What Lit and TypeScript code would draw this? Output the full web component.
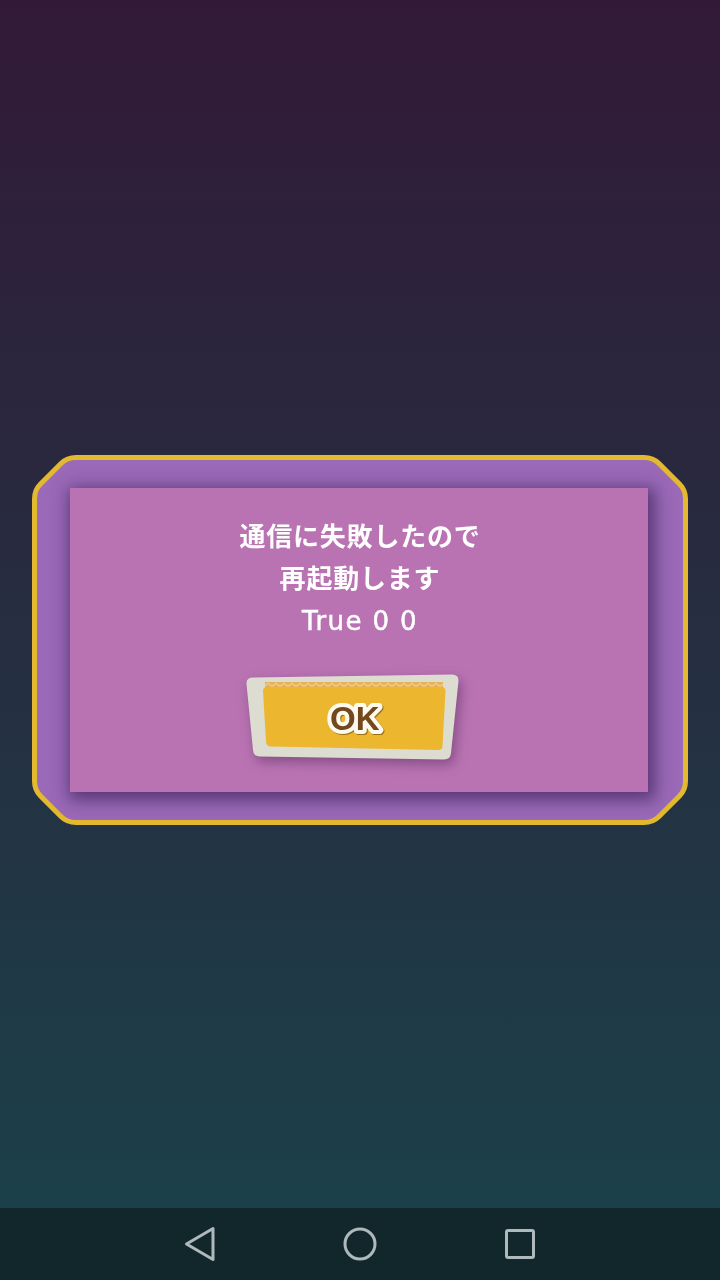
import { LitElement, html, css } from "lit";
import { customElement } from "lit/decorators.js";

@customElement("app-root")
export class AppRoot extends LitElement {
  static styles = css`
    :host {
      display: flex;
      flex-direction: column;
      width: 720px;
      height: 1280px;
      overflow: hidden;
      font-family: "Noto Sans CJK JP", "Noto Sans", sans-serif;
    }
    .screen {
      flex: 1;
      padding: 455px 32px 0;
      background: linear-gradient(180deg, #321938 0%, #1b404a 100%);
    }
    .dialog {
      position: relative;
      width: 656px;
      height: 370px;
      padding: 33px 40px 33px 38px;
      box-sizing: border-box;
    }
    .frame {
      position: absolute;
      inset: 0;
    }
    .panel {
      position: relative;
      height: 304px;
      padding-top: 26px;
      box-sizing: border-box;
      background: #b973b2;
      box-shadow: 3px 4px 15px 4px rgba(58, 32, 88, 0.68);
    }
    .message {
      padding-left: 2px;
      color: #fff;
      font-size: 26px;
      font-weight: 700;
      line-height: 42px;
      letter-spacing: 0.8px;
      text-align: center;
      filter: blur(0.35px);
    }
    .latin {
      font-family: "DejaVu Sans", sans-serif;
      font-weight: 400;
      letter-spacing: 1.4px;
      -webkit-text-stroke: 0.5px #fff;
    }
    .ok {
      width: 226px;
      height: 96px;
      margin: 28px 0 0 170px;
    }
    .ok svg {
      display: block;
      filter: drop-shadow(3px 5px 6px rgba(80, 40, 90, 0.5));
    }
    .ok text {
      font-family: "Liberation Sans", sans-serif;
      font-size: 33px;
      font-weight: 700;
      fill: #74481d;
      stroke: #fdfbf0;
      stroke-width: 8px;
      stroke-linejoin: round;
      paint-order: stroke;
      filter: drop-shadow(1px 1.5px 0.5px rgba(125, 85, 15, 0.75));
    }
    .nav {
      flex: none;
      height: 72px;
      display: flex;
      align-items: center;
      justify-content: center;
      gap: 120px;
      background: #12272c;
    }
    .nav svg {
      display: block;
      fill: none;
      stroke: #aeb9bc;
      stroke-width: 3;
      stroke-linejoin: round;
    }
  `;

  render() {
    return html`
      <div class="screen">
        <div class="dialog">
          <svg class="frame" width="656" height="370" viewBox="0 0 656 370">
            <path
              d="M44 2.500H612Q621 2.500 627 8.500L647.500 29Q653.500 35 653.500 44V326Q653.500 335 647.500 341L627 361.500Q621 367.500 612 367.500H44Q35 367.500 29 361.500L8.500 341Q2.500 335 2.500 326V44Q2.500 35 8.500 29L29 8.500Q35 2.500 44 2.500Z"
              fill="#9a69b7"
              stroke="#e2b92f"
              stroke-width="5"
            />
          </svg>
          <div class="panel">
            <div class="message">
              通信に失敗したので<br />再起動します<br /><span class="latin">True 0 0</span>
            </div>
            <div class="ok">
              <svg width="226" height="96" viewBox="0 0 226 96">
                <defs>
                  <pattern id="wafer" width="8" height="5" patternUnits="userSpaceOnUse">
                    <rect width="8" height="5" fill="#eec56c" />
                    <path d="M0 4L4 1L8 4" fill="none" stroke="#e4a858" stroke-width="1.500" />
                  </pattern>
                </defs>
                <path
                  d="M13 7.500L212 4.500Q219 4.500 218.500 11L211 83Q210.500 89.500 204 89.500L20 86.500Q13.500 86.500 13 80L6.500 14Q6 7.500 13 7.500Z"
                  fill="#dcdcd0"
                />
                <rect x="25" y="12" width="178" height="6" fill="url(#wafer)" />
                <path
                  d="M27 17H201Q205.500 17 205.500 21L202.500 76Q202.500 80 198 80L31 76.500Q26.500 76.500 26 72L23 21Q23 17 27 17Z"
                  fill="#ecb72f"
                />
                <text x="90" y="60">OK</text>
              </svg>
            </div>
          </div>
        </div>
      </div>
      <div class="nav">
        <svg width="40" height="40" viewBox="0 0 40 40">
          <path d="M6.500 20L33 4.500V35.500Z" />
        </svg>
        <svg width="40" height="40" viewBox="0 0 40 40">
          <circle cx="20" cy="20" r="15" />
        </svg>
        <svg width="40" height="40" viewBox="0 0 40 40">
          <rect x="6.500" y="6.500" width="27" height="27" rx="1.500" />
        </svg>
      </div>
    `;
  }
}
